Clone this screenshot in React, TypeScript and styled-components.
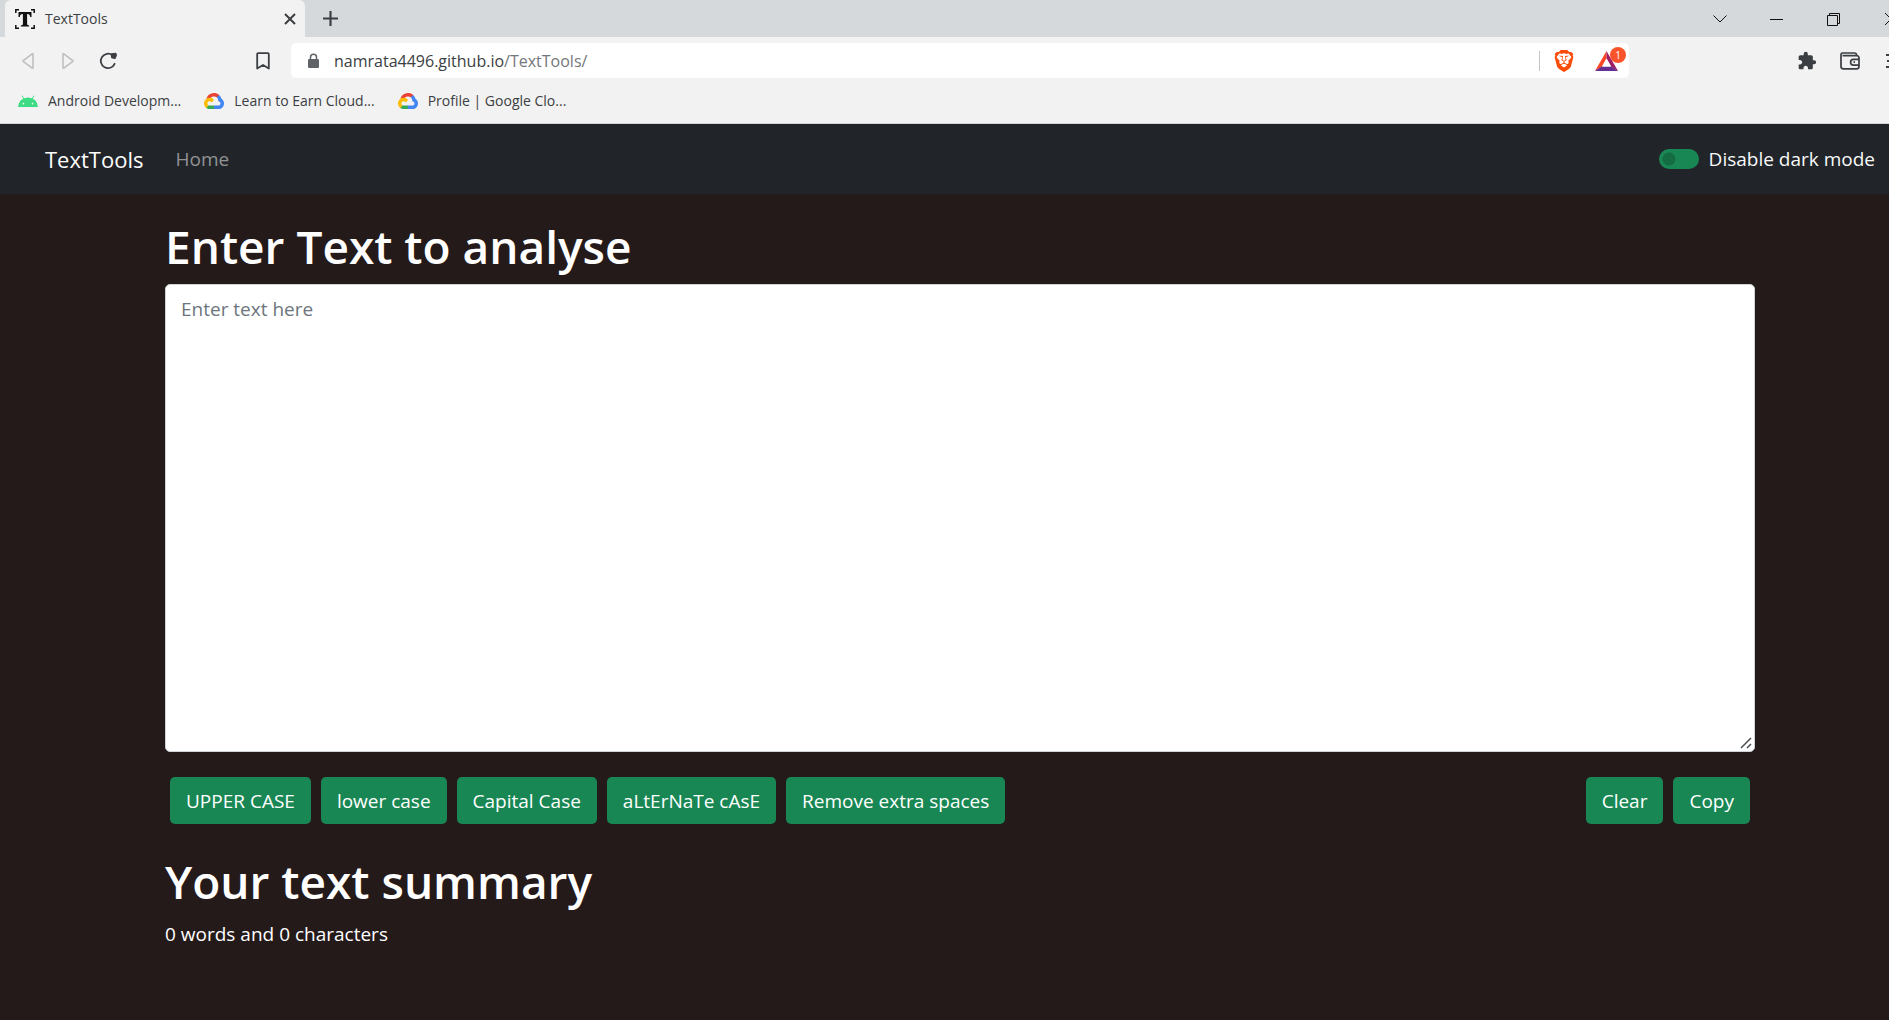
import React, { useState } from "react";
import styled, { createGlobalStyle } from "styled-components";
import { MdExtension } from "react-icons/md";
import { SiBrave } from "react-icons/si";

const GlobalStyle = createGlobalStyle`
  *, *::before, *::after { box-sizing: border-box; }
  html, body, #root { height: 100%; }
  body {
    margin: 0;
    overflow: hidden;
    background: #251a1a;
    font-family: "Open Sans", "Noto Sans", sans-serif;
  }
  button { font-family: inherit; }
  svg { display: block; flex: none; }
`;

/* The window reaches a little past the right edge of the screen. */
const Window = styled.div`
  width: calc(100% + 31px);
  min-height: 100%;
`;

/* ---------- browser ---------- */

const Browser = styled.header`
  background: #f2f2f2;
  border-bottom: 1px solid #cfd2d8;
  color: #3b3e42;
`;

const TabStrip = styled.div`
  display: flex;
  align-items: center;
  height: 37px;
  padding-left: 5px;
  background: #d5d9dc;
`;

const Tab = styled.div`
  display: flex;
  align-items: center;
  gap: 10px;
  width: 300px;
  height: 100%;
  padding: 0 5px 0 10px;
  border-radius: 6px 6px 0 0;
  background: #f2f2f2;
  font-size: 14px;
`;

const TabTitle = styled.span`
  flex: 1;
`;

const IconButton = styled.button<{ $width: number; $color?: string }>`
  display: flex;
  align-items: center;
  justify-content: center;
  width: ${(p) => p.$width}px;
  height: 36px;
  padding: 0;
  border: 0;
  background: none;
  color: ${(p) => p.$color ?? "#3b3e42"};
`;

const WindowControls = styled.div`
  display: flex;
  margin-left: auto;
  padding-right: 1px;
`;

const Toolbar = styled.div`
  display: flex;
  align-items: center;
  height: 47px;
`;

const ToolGroup = styled.div<{ $end?: boolean }>`
  display: flex;
  flex: none;
  justify-content: ${(p) => (p.$end ? "flex-end" : "flex-start")};
  width: 291px;
  padding: ${(p) => (p.$end ? "0 6px 0 0" : "0 8px")};
`;

const BookmarkSlot = styled.div`
  margin-left: auto;
`;

const AddressBar = styled.div`
  display: flex;
  flex: 1;
  align-items: center;
  height: 35px;
  padding: 0 8px 0 16px;
  border-radius: 5px;
  background: #fff;
`;

const Url = styled.div`
  flex: 1;
  padding-left: 14px;
  font-size: 16px;
  color: #3b3e42;
`;

const UrlPath = styled.span`
  color: #74777b;
`;

const Divider = styled.span`
  width: 1px;
  height: 20px;
  margin-right: 4px;
  background: #c3c5c8;
`;

const RewardsButton = styled(IconButton)`
  position: relative;
  margin-left: 7px;
`;

const Badge = styled.span`
  position: absolute;
  top: 4px;
  right: -5px;
  width: 16px;
  height: 16px;
  border-radius: 8px;
  background: #fb542b;
  color: #fff;
  font-size: 10px;
  line-height: 16px;
  text-align: center;
`;

const Bookmarks = styled.nav`
  display: flex;
  gap: 23px;
  height: 39px;
  padding: 4px 18px 0;
`;

const Bookmark = styled.a`
  display: flex;
  align-items: flex-start;
  gap: 10px;
  color: #3b3e42;
  font-size: 14px;
  line-height: 26px;
  text-decoration: none;

  svg { margin-top: 3px; }
`;

/* ---------- page ---------- */

const Navbar = styled.nav`
  display: flex;
  align-items: center;
  height: 70px;
  padding: 0 45px;
  background: #212529;
`;

const Brand = styled.a`
  margin-right: 32px;
  color: #fff;
  font-size: 22px;
  text-decoration: none;
`;

const NavLink = styled.a`
  color: #909294;
  font-size: 19px;
  text-decoration: none;
`;

const SwitchLabel = styled.label`
  display: flex;
  align-items: center;
  gap: 10px;
  margin-left: auto;
  color: #f8f9fa;
  font-size: 19px;
`;

const Switch = styled.input`
  appearance: none;
  width: 40px;
  height: 20px;
  margin: 0;
  border-radius: 10px;
  background: radial-gradient(circle at 10px 10px, #146c43 6px, #198754 7px);

  &:checked {
    background: radial-gradient(circle at 30px 10px, #146c43 6px, #198754 7px);
  }
`;

const Main = styled.main`
  padding: 22px 165px;
  color: #fff;
`;

const Heading = styled.h1`
  margin: 0 0 8px;
  font-size: 46px;
  font-weight: 600;
  line-height: 60px;
`;

const TextField = styled.div`
  position: relative;
`;

const TextBox = styled.textarea`
  display: block;
  width: 100%;
  height: 468px;
  padding: 9px 15px;
  border: 1px solid #ced4da;
  border-radius: 5px;
  background: #fff;
  color: #212529;
  font-family: inherit;
  font-size: 19px;
  line-height: 30px;
  resize: vertical;

  &::placeholder { color: #6c757d; }
  &::-webkit-resizer { background: transparent; }
`;

const Grip = styled.svg`
  position: absolute;
  right: 3px;
  bottom: 3px;
  pointer-events: none;
`;

const Actions = styled.div`
  display: flex;
  gap: 10px;
  margin: 25px 5px 27px;
`;

const Spacer = styled.span`
  flex: 1;
`;

const ActionButton = styled.button`
  height: 47px;
  padding: 0 16px;
  border: 0;
  border-radius: 5px;
  background: #198754;
  color: #fff;
  font-size: 19px;
`;

const Summary = styled.p`
  margin: 0;
  font-size: 19px;
  line-height: 30px;
`;

/* ---------- drawings ---------- */

const Favicon = () => (
  <svg width="20" height="20" viewBox="0 0 20 20" fill="none" stroke="#111" aria-hidden="true">
    <path d="M.8 4V.8H4M16 .8h3.2V4M19.2 16v3.2H16M4 19.2H.8V16" strokeWidth="1.5" />
    <path fill="#111" stroke="none" d="M3.5 3h13v5h-1.3C15 6 14.300 5 12.400 5h-.3v10c0 .9.6 1.300 2 1.300v1.200H5.900v-1.200c1.400 0 2-.4 2-1.300V5h-.3C5.700 5 5 6 4.800 8H3.500z" />
  </svg>
);

const LockIcon = () => (
  <svg width="13" height="16" viewBox="0 0 13 16" fill="none" aria-hidden="true">
    <path d="M3.500 7V4.200a3 3 0 0 1 6 0V7" stroke="#5f6368" strokeWidth="1.500" />
    <rect x="1" y="6" width="11" height="9" rx="1.200" fill="#5f6368" />
  </svg>
);

const AndroidIcon = () => (
  <svg width="20" height="20" viewBox="0 0 20 20" aria-hidden="true">
    <path d="M4.200 5 6.500 9M15.800 5 13.500 9" stroke="#3ddc84" strokeWidth="1" strokeLinecap="round" />
    <path d="M0 16a10 9.500 0 0 1 20 0z" fill="#3ddc84" />
    <circle cx="5.400" cy="12.600" r=".9" fill="#f2f2f2" />
    <circle cx="14.600" cy="12.600" r=".9" fill="#f2f2f2" />
  </svg>
);

const CloudIcon = () => (
  <svg width="20" height="20" viewBox="0 -25 256 256" aria-hidden="true">
    <path fill="#ea4335" d="M170.250 56.820 192.500 34.570l1.490-9.370C153.440-11.680 88.980-7.500 52.420 33.920 42.270 45.420 34.730 59.760 30.720 74.570l7.970-1.120 44.500-7.340 3.440-3.510c19.800-21.750 53.270-24.670 76.130-6.170z" />
    <path fill="#4285f4" d="M224.200 73.920A100.200 100.200 0 0 0 193.990 25.200l-31.230 31.230a55.500 55.500 0 0 1 20.380 44.040v5.540c15.350 0 27.800 12.450 27.800 27.800 0 15.350-12.450 27.480-27.800 27.480h-55.680L122 167.220v33.340l5.460 5.230h55.670c39.930.31 72.560-31.490 72.870-71.420.19-24.200-11.750-46.890-31.800-60.450" />
    <path fill="#34a853" d="M71.870 205.800h55.590v-44.510H71.870c-3.960 0-7.800-.85-11.400-2.500l-7.890 2.420-22.400 22.250-1.960 7.580c12.570 9.490 27.900 14.830 43.650 14.760" />
    <path fill="#fbbc05" d="M71.870 61.430C31.940 61.660-.24 94.230 0 134.160c.13 22.300 10.550 43.290 28.220 56.880l32.250-32.250c-13.990-6.320-20.210-22.780-13.890-36.770 6.320-14 22.790-20.210 36.780-13.890a28 28 0 0 1 13.890 13.890l32.240-32.250a72.400 72.400 0 0 0-57.620-28.340" />
  </svg>
);

const BackIcon = ({ flip = false }: { flip?: boolean }) => (
  <svg width="14" height="18" viewBox="0 0 14 18" fill="none" aria-hidden="true">
    <path d={flip ? "M2 2.200v13.600a.5.5 0 0 0 .8.400l9-6.800a.5.5 0 0 0 0-.8l-9-6.800a.5.5 0 0 0-.8.400z" : "M12 2.200v13.600a.5.5 0 0 1-.8.400l-9-6.800a.5.5 0 0 1 0-.8l9-6.800a.5.5 0 0 1 .8.400z"} stroke="#bcbdbf" strokeWidth="1.500" />
  </svg>
);

const ReloadIcon = () => (
  <svg width="18" height="18" viewBox="0 0 18 18" fill="none" aria-hidden="true">
    <path d="M15.600 11.800A7.200 7.200 0 1 1 13.500 3.300" stroke="#3b3e42" strokeWidth="1.800" strokeLinecap="round" />
    <path d="M12.300 1.800 17 1.200l.4 2.200-1.200 3.200-3.700-.8z" fill="#3b3e42" stroke="#3b3e42" strokeLinejoin="round" />
  </svg>
);

const BookmarkIcon = () => (
  <svg width="14" height="18" viewBox="0 0 14 18" fill="none" aria-hidden="true">
    <path d="M1.200 2.200a1 1 0 0 1 1-1h9.600a1 1 0 0 1 1 1v14.300L7 13l-5.800 3.500z" stroke="#3b3e42" strokeWidth="1.800" strokeLinejoin="round" />
  </svg>
);

const RewardsIcon = () => (
  <svg width="23" height="20" viewBox="0 0 23 20" aria-hidden="true">
    <path d="M11.500 0 0 20l7-4.500 4.500-8z" fill="#ff4724" />
    <path d="M11.500 0 23 20l-7-4.500-4.500-8z" fill="#9e1f63" />
    <path d="M0 20h23l-6.500-4.500h-10z" fill="#662d91" />
    <path d="M11.500 7.500 7 15.500h9z" fill="#fff" />
  </svg>
);

const WalletIcon = () => (
  <svg width="20" height="18" viewBox="0 0 20 18" fill="none" stroke="#3b3e42" strokeWidth="1.700" aria-hidden="true">
    <path d="M16.500 3.500V2.800a1.800 1.800 0 0 0-1.800-1.800H2.500A1.500 1.500 0 0 0 1 2.500v12A2.300 2.300 0 0 0 3.300 16.800h13.400a2.300 2.300 0 0 0 2.300-2.300V6a2.300 2.300 0 0 0-2.300-2.300H2.500" />
    <path d="M19 7.300h-5.500a2.900 2.900 0 0 0 0 5.800H19M13.500 10.200h1.500" />
  </svg>
);

const LineIcon = ({ d, size = 14, weight = 1 }: { d: string; size?: number; weight?: number }) => (
  <svg width={size} height={size} viewBox="0 0 14 14" fill="none" stroke="currentColor" strokeWidth={weight} aria-hidden="true">
    <path d={d} />
  </svg>
);

const bookmarks = [
  { title: "Android Developm...", icon: <AndroidIcon /> },
  { title: "Learn to Earn Cloud...", icon: <CloudIcon /> },
  { title: "Profile | Google Clo...", icon: <CloudIcon /> },
];

const cap = (w: string) => w.charAt(0).toUpperCase() + w.slice(1).toLowerCase();

const transforms: { label: string; run: (t: string) => string }[] = [
  { label: "UPPER CASE", run: (t) => t.toUpperCase() },
  { label: "lower case", run: (t) => t.toLowerCase() },
  { label: "Capital Case", run: (t) => t.split(" ").map(cap).join(" ") },
  {
    label: "aLtErNaTe cAsE",
    run: (t) => [...t].map((c, i) => (i % 2 ? c.toUpperCase() : c.toLowerCase())).join(""),
  },
  { label: "Remove extra spaces", run: (t) => t.trim().replace(/ +/g, " ") },
];

export default function App() {
  const [text, setText] = useState("");
  const words = text.split(/\s+/).filter(Boolean).length;

  return (
    <>
      <GlobalStyle />
      <Window>
        <Browser>
          <TabStrip>
            <Tab>
              <Favicon />
              <TabTitle>TextTools</TabTitle>
              <IconButton $width={20} aria-label="Close tab">
                <LineIcon d="M2 2l10 10M12 2 2 12" weight={2} />
              </IconButton>
            </Tab>
            <IconButton $width={50} aria-label="New tab">
              <LineIcon d="M7 0v14M0 7h14" size={15} weight={2} />
            </IconButton>
            <WindowControls>
              <IconButton $width={57} $color="#111" aria-label="Search tabs">
                <LineIcon d="M.5 3.500 7 10l6.500-6.500" />
              </IconButton>
              <IconButton $width={57} $color="#111" aria-label="Minimize">
                <LineIcon d="M0 7.500h13" />
              </IconButton>
              <IconButton $width={57} $color="#111" aria-label="Restore">
                <LineIcon d="M.5 3.500h10v10H.5zM2.500 3.500v-2h10v10h-2" />
              </IconButton>
              <IconButton $width={57} $color="#111" aria-label="Close window">
                <LineIcon d="M1 1l12 12M13 1 1 13" />
              </IconButton>
            </WindowControls>
          </TabStrip>

          <Toolbar>
            <ToolGroup>
              <IconButton $width={40} aria-label="Back"><BackIcon /></IconButton>
              <IconButton $width={40} aria-label="Forward"><BackIcon flip /></IconButton>
              <IconButton $width={40} aria-label="Reload"><ReloadIcon /></IconButton>
              <BookmarkSlot>
                <IconButton $width={40} aria-label="Bookmark this page"><BookmarkIcon /></IconButton>
              </BookmarkSlot>
            </ToolGroup>
            <AddressBar>
              <LockIcon />
              <Url>
                namrata4496.github.io<UrlPath>/TextTools/</UrlPath>
              </Url>
              <Divider />
              <IconButton $width={40} $color="#fb4c0a" aria-label="Shields"><SiBrave size={22} /></IconButton>
              <RewardsButton $width={30} aria-label="Rewards">
                <RewardsIcon />
                <Badge>1</Badge>
              </RewardsButton>
            </AddressBar>
            <ToolGroup $end>
              <IconButton $width={43} aria-label="Extensions"><MdExtension size={20} /></IconButton>
              <IconButton $width={43} aria-label="Wallet"><WalletIcon /></IconButton>
              <IconButton $width={43} aria-label="Menu">
                <LineIcon d="M0 1h14M1 7h13M0 13h14" weight={2} />
              </IconButton>
            </ToolGroup>
          </Toolbar>

          <Bookmarks>
            {bookmarks.map((b) => (
              <Bookmark href="#" key={b.title}>
                {b.icon}
                {b.title}
              </Bookmark>
            ))}
          </Bookmarks>
        </Browser>

        <Navbar>
          <Brand href="#">TextTools</Brand>
          <NavLink href="#">Home</NavLink>
          <SwitchLabel>
            <Switch type="checkbox" role="switch" />
            Disable dark mode
          </SwitchLabel>
        </Navbar>

        <Main>
          <Heading><label htmlFor="text">Enter Text to analyse</label></Heading>
          <TextField>
            <TextBox id="text" placeholder="Enter text here" value={text} onChange={(e) => setText(e.target.value)} />
            <Grip width="12" height="12" viewBox="0 0 12 12" fill="none" stroke="#4a4d50" strokeWidth="1.500" aria-hidden="true">
              <path d="M1 11 11 1M7 11l4-4" />
            </Grip>
          </TextField>
          <Actions>
            {transforms.map((t) => (
              <ActionButton key={t.label} onClick={() => setText(t.run(text))}>{t.label}</ActionButton>
            ))}
            <Spacer />
            <ActionButton onClick={() => setText("")}>Clear</ActionButton>
            <ActionButton onClick={() => navigator.clipboard?.writeText(text)}>Copy</ActionButton>
          </Actions>
          <Heading as="h2">Your text summary</Heading>
          <Summary>{words} words and {text.length} characters</Summary>
        </Main>
      </Window>
    </>
  );
}
